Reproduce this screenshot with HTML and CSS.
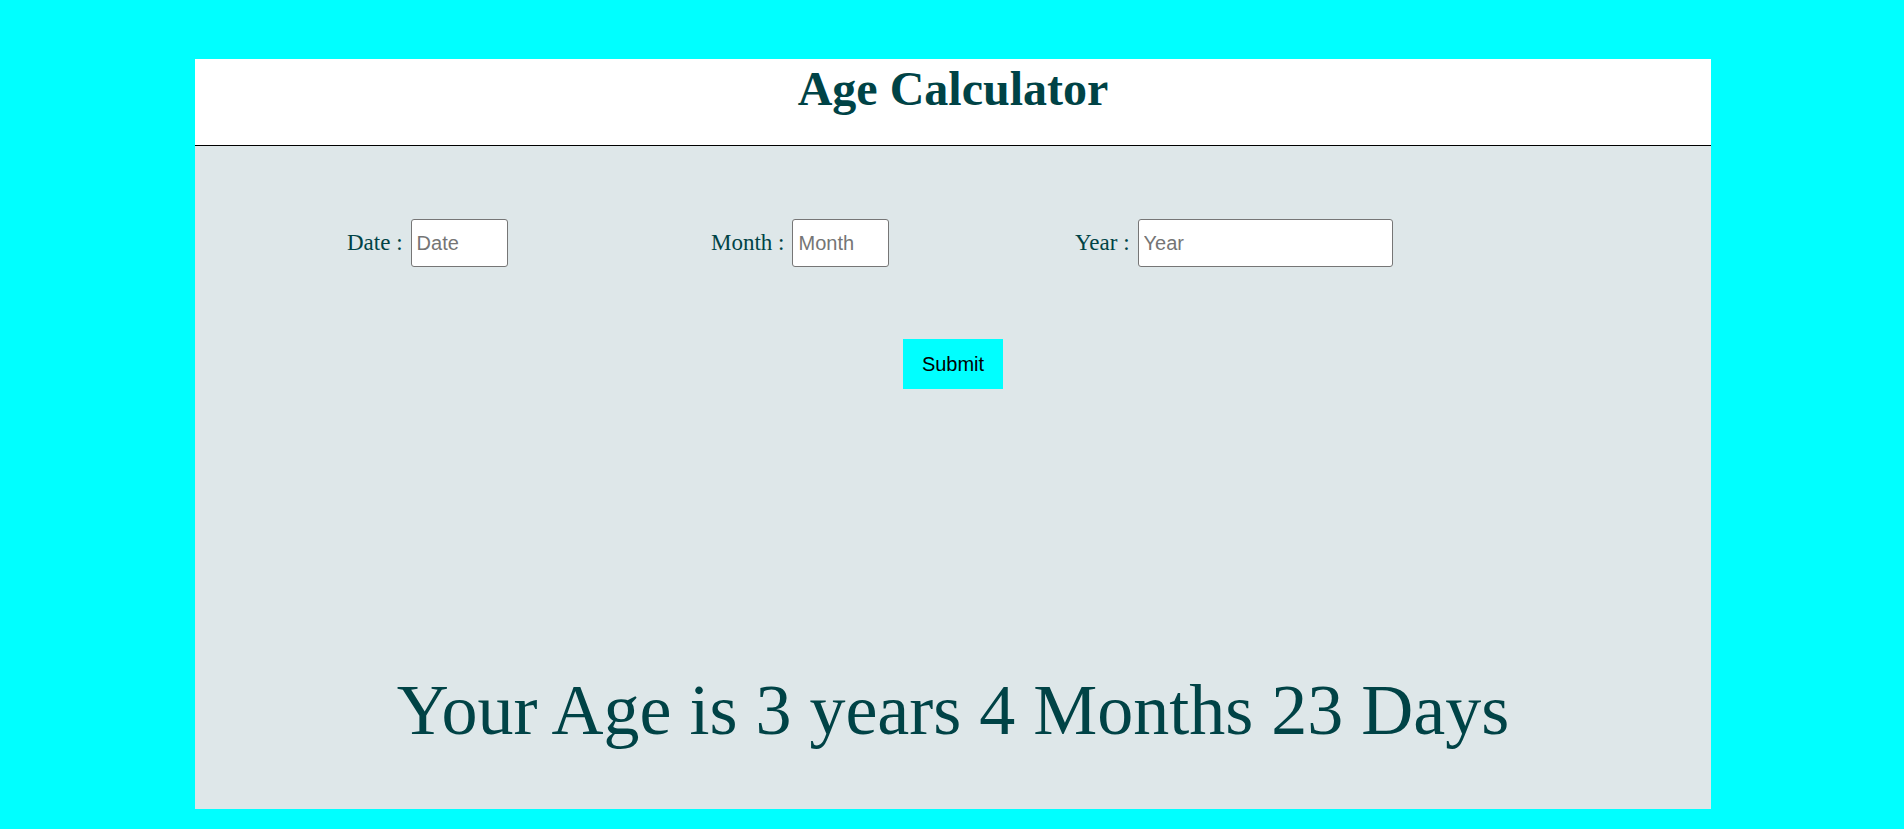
FILE: index.html
```html
<!DOCTYPE html>
<html>
<head>
<meta charset="utf-8">
<link rel="stylesheet" href="styles.css">
</head>
<body>
<div class="app">
  <header class="head"><h1 class="title">Age Calculator</h1></header>
  <main class="panel">
    <div class="fields">
      <div class="field"><label class="lbl">Date :</label> <input class="inp inp-s" placeholder="Date"></div>
      <div class="field"><label class="lbl">Month :</label> <input class="inp inp-s" placeholder="Month"></div>
      <div class="field"><label class="lbl">Year :</label> <input class="inp inp-l" placeholder="Year"></div>
    </div>
    <div class="actions"><button class="btn">Submit</button></div>
    <p class="result">Your Age is 3 years 4 Months 23 Days</p>
  </main>
</div>
</body>
</html>
```
FILE: styles.css
```css
html, body { margin: 0; padding: 0; }
body {
  background: #00ffff;
  font-family: "Liberation Serif", "Times New Roman", serif;
  color: #004346;
  padding: 59px 0 20px;
}
.app {
  width: 1516px;
  margin: 0 193px 0 195px;
  background: #dee7e9;
  height: 750px;
  display: flex;
  flex-direction: column;
}
.head {
  background: #fff;
  height: 87px;
  border-bottom: 1px solid #000;
  box-sizing: border-box;
  text-align: center;
}
.title {
  margin: 0;
  font-size: 48px;
  font-weight: bold;
  line-height: 1;
  padding-top: 6px;
  color: #004346;
}
.panel { flex: 1; display: flex; flex-direction: column; }
.fields {
  display: flex;
  padding-left: 152px;
  margin-top: 73px;
}
.field {
  width: 364px;
  display: flex;
  align-items: center;
  font-size: 23px;
}
.lbl { margin-right: 8px; }
.inp {
  height: 48px;
  box-sizing: border-box;
  border: 1px solid #767676;
  border-radius: 3px;
  background: #fff;
  font-family: "Liberation Sans", Arial, sans-serif;
  font-size: 20px;
  padding: 0 5px;
  color: #000;
}
.inp::placeholder { color: #757575; }
.inp-s { width: 97px; }
.inp-l { width: 255px; }
.actions {
  display: flex;
  justify-content: center;
  margin-top: 72px;
}
.btn {
  width: 100px;
  height: 50px;
  border: none;
  background: #00ffff;
  font-family: "Liberation Sans", Arial, sans-serif;
  font-size: 20px;
  color: #000;
}
.result {
  margin: auto 0 0;
  padding-bottom: 63px;
  text-align: center;
  font-size: 72px;
  line-height: 1;
}
```
